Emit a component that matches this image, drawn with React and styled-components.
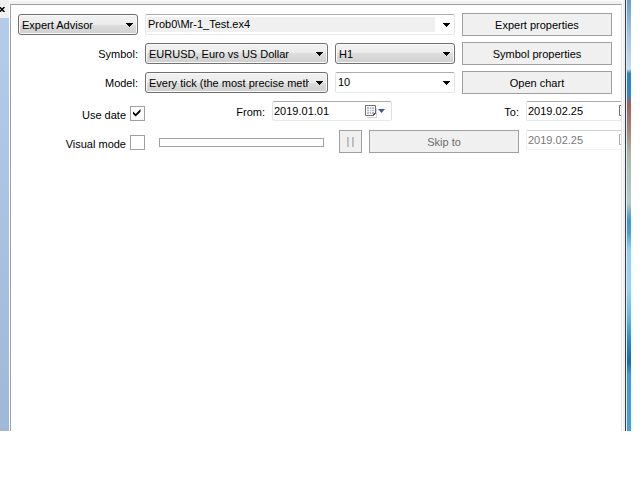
import React, { useState } from 'react'
import styled, { createGlobalStyle } from 'styled-components'

const GlobalStyle = createGlobalStyle`
  * {
    box-sizing: border-box;
  }
  body {
    margin: 0;
    background: #ffffff;
    overflow: hidden;
  }
  body, button, input, select {
    font-family: "Liberation Sans", Arial, sans-serif;
    font-size: 11px;
    color: #000000;
  }
`

const Window = styled.div`
  display: flex;
  min-height: calc(100vh - 49px);
  margin-right: 9px;
`

const Dock = styled.aside`
  display: flex;
  flex-direction: column;
  flex: 0 0 10px;
  border-right: 1px solid #ffffff;
`

const DockHeader = styled.div`
  height: 18px;
  padding-top: 7px;
  background: #f0f0f0;
`

const CloseButton = styled.button`
  display: block;
  padding: 0;
  border: none;
  background: none;
  svg {
    display: block;
  }
`

const DockBody = styled.div`
  flex: 1;
  background: linear-gradient(#b5cce9, #9fb8d6);
`

const Main = styled.main`
  display: flex;
  flex-direction: column;
  flex: 1;
  min-width: 0;
`

const TopEdge = styled.div`
  height: 4px;
  border-top: 1px solid #fbfbfb;
  background: #f0f0f0;
`

const Panel = styled.form`
  flex: 1;
  padding: 8px 0 8px 7px;
  border: 1px solid #a0a0a0;
  border-right-color: #e3e3e3;
  border-bottom: none;
  background: #ffffff;
  overflow: hidden;
`

const Settings = styled.div`
  display: grid;
  grid-template-columns: 120px minmax(0, 1fr) 120px 150px;
  grid-auto-rows: 23px;
  gap: 6px 7px;
  align-items: center;
  margin-right: 9px;
`

const Testing = styled.div`
  display: grid;
  grid-auto-rows: 23px;
  gap: 6px;
  margin-top: 7px;
`

const Row = styled.div`
  display: flex;
`

const Label = styled.label`
  padding-right: ${({ $wide }) => ($wide ? '7px' : '0')};
  line-height: 22px;
  text-align: right;
  white-space: nowrap;
  flex: ${({ $grow }) => ($grow ? '1' : '0 0 auto')};
  min-width: ${({ $min }) => $min || '0'};
`

const Picker = styled.div`
  display: grid;
  position: relative;
  grid-column: span ${({ $span }) => $span || 1};
  svg {
    position: absolute;
    right: 5px;
    top: 9px;
    pointer-events: none;
  }
`

const Select = styled.select`
  appearance: none;
  width: 100%;
  height: 21px;
  padding: 0 18px 0 3px;
  border: 1px solid #707070;
  border-radius: 3px;
  background: linear-gradient(#f2f2f2, #ebebeb 50%, #dddddd 50%, #cfcfcf);
  box-shadow: inset 0 0 0 1px #fafafa;
  outline: none;
`

const PlainSelect = styled(Select)`
  padding-left: 2px;
  padding-bottom: 2px;
  border-color: #abadb3 #e2e3ea #e2e9ef;
  border-radius: 2px;
  box-shadow: none;
  background: ${({ $filled }) =>
    $filled
      ? 'linear-gradient(#f0f0f0, #f0f0f0) 1px 2px / calc(100% - 20px) 15px no-repeat #ffffff'
      : '#ffffff'};
`

const Button = styled.button`
  height: 23px;
  padding: 0;
  border: 1px solid #a0a0a0;
  background: #f0f0f0;
  &:disabled {
    color: #6d6d6d;
  }
`

const PauseButton = styled(Button)`
  display: flex;
  align-items: center;
  justify-content: center;
  flex: 0 0 23px;
`

const SkipButton = styled(Button)`
  flex: 0 0 150px;
  margin: 0 7px;
`

const CheckLabel = styled.label`
  display: flex;
  justify-content: flex-end;
  align-items: flex-end;
  flex: 0 0 127px;
  gap: 4px;
  padding-bottom: 3px;
  line-height: 12px;
`

const CheckMark = styled.span`
  display: block;
  position: relative;
  height: 15px;
  svg {
    position: absolute;
    left: 3px;
    top: 3px;
    pointer-events: none;
  }
`

const CheckInput = styled.input`
  appearance: none;
  display: block;
  width: 15px;
  height: 15px;
  margin: 0;
  border: 1px solid #a0a0a0;
  background: #ffffff;
`

const Slider = styled.input`
  appearance: none;
  flex: 1;
  min-width: 0;
  height: 9px;
  margin: 8px 15px 0 14px;
  border: 1px solid #a0a0a0;
  background: #ffffff;
  &::-webkit-slider-thumb {
    appearance: none;
    width: 0;
    height: 0;
  }
`

const DateBox = styled.div`
  display: flex;
  width: 120px;
  height: 20px;
  border: 1px solid #abadb3;
  border-color: #abadb3 #dbdfe6 #e3e9ef #e2e3ea;
  border-radius: 2px;
  opacity: ${({ $off }) => ($off ? 0.55 : 1)};
  input {
    flex: 1;
    min-width: 0;
    padding: 0 0 1px 1px;
    border: none;
    background: none;
    outline: none;
  }
  button {
    flex: 0 0 26px;
    padding: 0;
    border: none;
    background: none;
  }
  svg {
    display: block;
  }
`

const ClippedCell = styled.div`
  flex: 0 0 95px;
  overflow: hidden;
`

const Frame = styled.div`
  display: grid;
  grid-template-columns: 1px 2px 1px 1px 4px;
  flex: 0 0 9px;
`

const FrameLine = styled.div`
  background: ${({ $color }) => $color};
`

const Wallpaper = styled.div`
  background: linear-gradient(
    #6f9dc8 0%,
    #a3c3df 8%,
    #c9dced 16%,
    #2f80bd 17%,
    #3585c0 22%,
    #a0605c 24%,
    #a78377 30%,
    #abb8a9 36%,
    #b7cbc6 47%,
    #4496cf 51%,
    #4c9dd5 54%,
    #97cdf4 58%,
    #9ad2f5 67%,
    #65b3df 74%,
    #2a8bc2 79%,
    #2166a6 84%,
    #449ad2 87%,
    #459fd8 100%
  );
`

function Arrow() {
  return (
    <svg width="7" height="4" viewBox="0 0 7 4" shapeRendering="crispEdges">
      <path d="M0 0h7v1H6v1H5v1H4v1H3V3H2V2H1V1H0z" />
    </svg>
  )
}

function CalendarIcon() {
  return (
    <svg width="21" height="13" viewBox="0 0 21 13">
      <path d="M2 12.5h9.5V3" fill="none" stroke="#d2d2d6" />
      <path d="M.5.5h10v8l-2 2h-8z" fill="#fdfdff" stroke="#756b6c" />
      <path d="M8 11V8h3z" fill="#4a4548" />
      <path d="M2 2h7v7H2z" fill="#b4bdd0" />
      <path d="M2 4.5h7M2 6.5h7M4.5 2v7M6.5 2v7" stroke="#ffffff" strokeWidth=".7" />
      <path d="M13 4h7l-3.5 4z" fill="#40588c" />
    </svg>
  )
}

function Combo({ id, label, text, span, plain, filled }) {
  const Control = plain ? PlainSelect : Select
  return (
    <Picker $span={span}>
      <Control id={id} aria-label={label} $filled={filled}>
        <option>{text}</option>
      </Control>
      <Arrow />
    </Picker>
  )
}

function DateField({ id, value, label, disabled }) {
  return (
    <DateBox $off={disabled}>
      <input id={id} defaultValue={value} aria-label={label} disabled={disabled} />
      <button type="button" aria-label="Calendar" disabled={disabled}>
        <CalendarIcon />
      </button>
    </DateBox>
  )
}

function Check({ text, checked, onChange }) {
  return (
    <CheckLabel>
      {text}
      <CheckMark>
        <CheckInput type="checkbox" checked={checked} onChange={onChange} />
        {checked && (
          <svg width="8" height="8" viewBox="0 0 8 8">
            <path d="M0 2.5 2.7 5 7.5 0v2.8L2.7 7.6 0 5z" />
          </svg>
        )}
      </CheckMark>
    </CheckLabel>
  )
}

export default function App() {
  const [useDate, setUseDate] = useState(true)
  const [visual, setVisual] = useState(false)

  return (
    <>
      <GlobalStyle />
      <Window>
        <Dock>
          <DockHeader>
            <CloseButton aria-label="Close">
              <svg width="5" height="5" viewBox="0 0 5 5">
                <path d="M-.5 0 4.5 5M4.5 0l-5 5" stroke="#000" strokeWidth="1.5" />
              </svg>
            </CloseButton>
          </DockHeader>
          <DockBody />
        </Dock>
        <Main>
          <TopEdge />
          <Panel onSubmit={(e) => e.preventDefault()}>
            <Settings>
              <Combo label="Program type" text="Expert Advisor" />
              <Combo label="Expert" text="Prob0\Mr-1_Test.ex4" span={2} plain filled />
              <Button type="button">Expert properties</Button>

              <Label htmlFor="symbol">Symbol:</Label>
              <Combo id="symbol" text="EURUSD, Euro vs US Dollar" />
              <Combo label="Period" text="H1" />
              <Button type="button">Symbol properties</Button>

              <Label htmlFor="model">Model:</Label>
              <Combo id="model" text="Every tick (the most precise method based on all available ticks)" />
              <Combo label="Spread" text="10" plain />
              <Button type="button">Open chart</Button>
            </Settings>
            <Testing>
              <Row>
                <Check text="Use date" checked={useDate} onChange={() => setUseDate(!useDate)} />
                <Label htmlFor="from" $wide $min="127px">From:</Label>
                <DateField id="from" value="2019.01.01" />
                <Label htmlFor="to" $wide $grow>To:</Label>
                <ClippedCell>
                  <DateField id="to" value="2019.02.25" />
                </ClippedCell>
              </Row>
              <Row>
                <Check text="Visual mode" checked={visual} onChange={() => setVisual(!visual)} />
                <Slider type="range" aria-label="Speed" disabled />
                <PauseButton type="button" aria-label="Pause" disabled>
                  <svg width="7" height="10" viewBox="0 0 7 10" shapeRendering="crispEdges">
                    <path d="M0 0h1v10H0zM5 0h1v10H5z" fill="#e2b184" />
                    <path d="M1 0h1v10H1zM6 0h1v10H6z" fill="#a5cdec" />
                  </svg>
                </PauseButton>
                <SkipButton type="button" disabled>Skip to</SkipButton>
                <ClippedCell>
                  <DateField label="Skip to date" value="2019.02.25" disabled />
                </ClippedCell>
              </Row>
            </Testing>
          </Panel>
        </Main>
        <Frame>
          <FrameLine $color="#ffffff" />
          <FrameLine $color="#f0f0f0" />
          <FrameLine $color="#34424e" />
          <FrameLine $color="#dcecf6" />
          <Wallpaper />
        </Frame>
      </Window>
    </>
  )
}
